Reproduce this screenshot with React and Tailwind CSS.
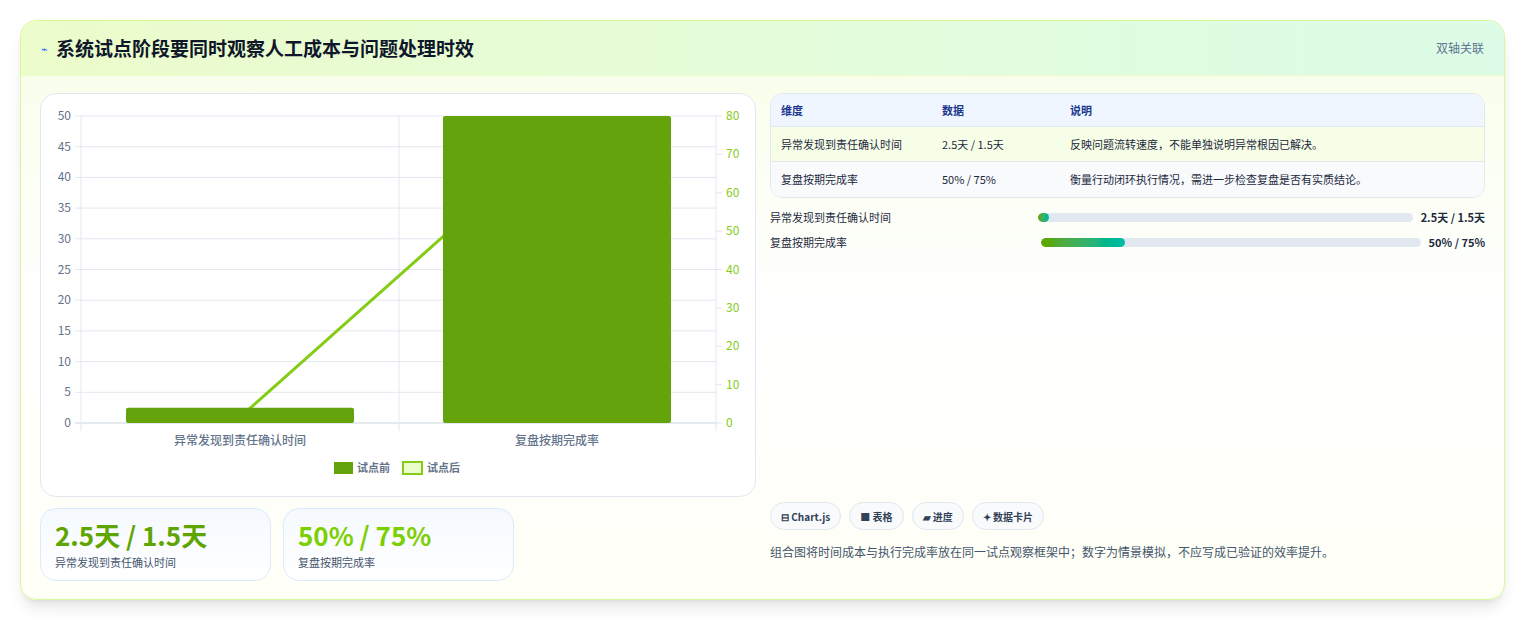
const F = { fontFamily: '"Noto Sans CJK SC", "Noto Sans", sans-serif' };

const leftTicks = [0, 5, 10, 15, 20, 25, 30, 35, 40, 45, 50];
const rightTicks = [0, 10, 20, 30, 40, 50, 60, 70, 80];
const X0 = 40, X1 = 675, Y0 = 22, Y1 = 329;
const yl = (v) => Y1 - (v / 50) * (Y1 - Y0);
const yr = (v) => Y1 - (v / 80) * (Y1 - Y0);

function Chart() {
  return (
    <svg width="715" height="402" viewBox="0 0 715 402" style={F}>
      {leftTicks.map((t) => (
        <g key={t}>
          <line x1={X0 - 6} x2={X1} y1={yl(t)} y2={yl(t)} stroke={t === 0 ? '#cbd5e1' : '#e2e8f0'} />
          <text x={X0 - 10} y={yl(t) + 4} textAnchor="end" fontSize="12" fill="#64748b">{t}</text>
        </g>
      ))}
      {rightTicks.map((t) => (
        <g key={t}>
          <line x1={X1} x2={X1 + 6} y1={yr(t)} y2={yr(t)} stroke="#e2e8f0" />
          <text x={X1 + 10} y={yr(t) + 4} fontSize="12" fill="#84cc16">{t}</text>
        </g>
      ))}
      <line x1={X0} x2={X0} y1={Y0} y2={Y1 + 8} stroke="#e2e8f0" />
      <line x1={358} x2={358} y1={Y0} y2={Y1 + 8} stroke="#e2e8f0" />
      <line x1={X1} x2={X1} y1={Y0} y2={Y1 + 8} stroke="#e2e8f0" />
      <line x1={199} y1={yr(1.5)} x2={516} y2={yr(75)} stroke="#84cc16" strokeWidth="3" />
      <rect x={85} y={yl(2.5)} width={228} height={Y1 - yl(2.5)} rx="2" fill="#65a30d" />
      <rect x={402} y={yl(50)} width={228} height={Y1 - yl(50)} rx="2" fill="#65a30d" />
      <text x={199} y={351} textAnchor="middle" fontSize="12" fill="#64748b" fontWeight="500">异常发现到责任确认时间</text>
      <text x={516} y={351} textAnchor="middle" fontSize="12" fill="#64748b" fontWeight="500">复盘按期完成率</text>
      <rect x={293} y={368} width={19} height={12} fill="#65a30d" />
      <text x={316} y={378} fontSize="11" fill="#64748b" fontWeight="600">试点前</text>
      <rect x={362} y={368} width={19} height={12} fill="#ecfccb" stroke="#84cc16" strokeWidth="2" />
      <text x={386} y={378} fontSize="11" fill="#64748b" fontWeight="600">试点后</text>
    </svg>
  );
}

const rows = [
  ['异常发现到责任确认时间', '2.5天 / 1.5天', '反映问题流转速度，不能单独说明异常根因已解决。'],
  ['复盘按期完成率', '50% / 75%', '衡量行动闭环执行情况，需进一步检查复盘是否有实质结论。'],
];

export default function App() {
  return (
    <div className="w-[1525px] h-[621px] bg-white pt-5 pl-5" style={F}>
      <div className="w-[1485px] h-[580px] rounded-2xl border border-lime-200 bg-gradient-to-b from-[#f7fee7] via-white to-[#fefff5] shadow-lg overflow-hidden flex flex-col">
        <div className="h-[55px] flex items-center justify-between px-5 bg-gradient-to-r from-[#ecfccb] to-[#dcfce7] border-b border-lime-100">
          <div className="flex items-center gap-2">
            <span className="text-[11px] text-blue-600">⌁</span>
            <span className="text-[19px] font-bold text-slate-900">系统试点阶段要同时观察人工成本与问题处理时效</span>
          </div>
          <span className="text-xs text-slate-500">双轴关联</span>
        </div>
        <div className="flex gap-[14px] px-[19px] pt-[17px]">
          <div className="w-[716px] flex flex-col gap-[11px]">
            <div className="h-[404px] rounded-2xl border border-slate-200 bg-white">
              <Chart />
            </div>
            <div className="flex gap-3">
              {[['2.5天 / 1.5天', '异常发现到责任确认时间', 'text-lime-600'], ['50% / 75%', '复盘按期完成率', 'text-lime-500']].map(([v, l, c]) => (
                <div key={l} className="w-[231px] h-[73px] rounded-2xl border border-blue-100 bg-gradient-to-b from-[#f5f9ff] to-white px-[14px] pt-[9px]">
                  <div className={`text-[26px] font-bold leading-[34px] ${c}`}>{v}</div>
                  <div className="text-[11px] text-slate-600 mt-0.5">{l}</div>
                </div>
              ))}
            </div>
          </div>
          <div className="w-[716px] flex flex-col">
            <div className="rounded-xl border border-slate-200 overflow-hidden text-[11px]">
              <div className="flex h-[33px] items-center bg-[#eff6ff] text-blue-900 font-semibold border-b border-slate-200">
                <div className="w-[171px] pl-[10px]">维度</div>
                <div className="w-[128px]">数据</div>
                <div>说明</div>
              </div>
              {rows.map((r, i) => (
                <div key={i} className={`flex h-[35px] items-center text-slate-800 ${i === 0 ? 'bg-[#f7fee7] border-b border-slate-200' : 'bg-[#f8fafc]'}`}>
                  <div className="w-[171px] pl-[10px]">{r[0]}</div>
                  <div className="w-[128px]">{r[1]}</div>
                  <div>{r[2]}</div>
                </div>
              ))}
            </div>
            <div className="mt-[12px] flex flex-col gap-[10px] text-[11px]">
              {[['异常发现到责任确认时间', '2.5天 / 1.5天', 3, 268], ['复盘按期完成率', '50% / 75%', 22, 271]].map(([l, v, p, o]) => (
                <div key={l} className="flex items-center h-[15px]">
                  <div className="text-slate-800" style={{ width: o }}>{l}</div>
                  <div className="flex-1 h-[9px] rounded-full bg-slate-200 overflow-hidden">
                    <div className="h-full rounded-full bg-gradient-to-r from-lime-600 to-teal-500" style={{ width: p + '%' }} />
                  </div>
                  <div className="pl-2 font-bold text-slate-800">{v}</div>
                </div>
              ))}
            </div>
            <div className="mt-auto flex gap-2 text-[10px] font-semibold text-slate-700">
              {['⊟ Chart.js', '■ 表格', '▰ 进度', '✦ 数据卡片'].map((c) => (
                <span key={c} className="h-[28px] px-[10px] flex items-center rounded-full border border-slate-200 bg-[#f8fafc]">{c}</span>
              ))}
            </div>
            <div className="mt-[13px] mb-[20px] text-[12px] text-slate-600">组合图将时间成本与执行完成率放在同一试点观察框架中；数字为情景模拟，不应写成已验证的效率提升。</div>
          </div>
        </div>
      </div>
    </div>
  );
}
